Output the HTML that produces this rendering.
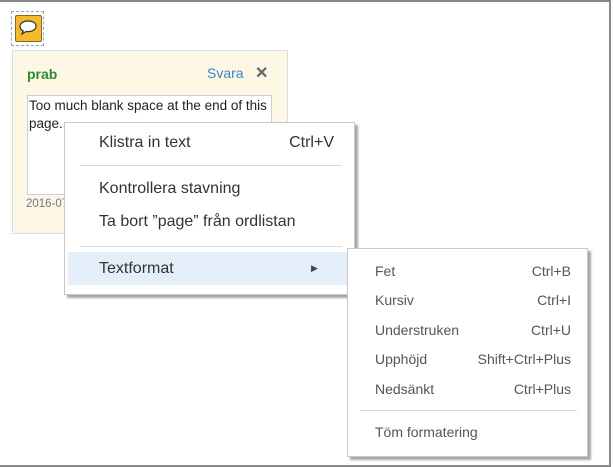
<!DOCTYPE html>
<html><head><style>
body{margin:0;width:613px;height:467px;background:#fff;position:relative;overflow:hidden;font-family:"Liberation Sans",sans-serif}
.frame{position:absolute;left:0;top:0;width:609px;height:463px;border:2px solid #8a8a8a;border-left:none;border-top:2px solid #888}
.abs{position:absolute}
.menu{position:absolute;background:#fff;border:1px solid #c8c8c8;box-shadow:3px 3px 2px rgba(0,0,0,.35)}
.m1 .it{position:absolute;left:34px;font-size:16px;color:#333}
.m1 .sc{position:absolute;right:20px;font-size:16px;color:#333}
.m2 .it{position:absolute;left:27px;font-size:14px;color:#555}
.m2 .sc{position:absolute;right:16px;font-size:14px;color:#555}
.sep{position:absolute;height:1px;background:#d8d8d8}
</style></head><body>
<div class="frame"></div>
<div class="abs" style="left:11px;top:11px;width:31px;height:33px;border:1px dashed #8ab"></div>
<div class="abs" style="left:15px;top:15px;width:25px;height:25px;background:#f5b92f;border:1px solid #8a6a20;border-radius:2px"></div>
<svg class="abs" style="left:17px;top:18px" width="22" height="20" viewBox="0 0 22 20"><path d="M11 3C6 3 3 5.5 3 8.5c0 2 1.3 3.5 3.2 4.4L5 16l4-2.5c.6.1 1.3.1 2 .1 5 0 8-2.5 8-5.5S16 3 11 3z" fill="#fff" stroke="#333" stroke-width="1.2"/></svg>
<div class="abs" style="left:12px;top:50px;width:274px;height:182px;background:#fdf7e6;border:1px solid #d6e0ea"></div>
<div class="abs" style="left:27px;top:66px;font-size:14px;font-weight:bold;color:#2e8b2e">prab</div>
<div class="abs" style="left:207px;top:65px;font-size:14px;color:#3a87c9">Svara</div>
<div class="abs" style="left:255px;top:63px;font-size:16px;color:#666;font-weight:bold">✕</div>
<div class="abs" style="left:27px;top:95px;width:243px;height:98px;background:#fff;border:1px solid #ccd"></div>
<div class="abs" style="left:29px;top:97px;font-size:13.5px;color:#222;line-height:18px">Too much blank space at the end of this<br>page.</div>
<div class="abs" style="left:26px;top:198px;font-size:11.5px;color:#777">2016-07</div>
<div class="menu m1" style="left:64px;top:122px;width:289px;height:171px">
<div class="it" style="top:11px">Klistra in text</div><div class="sc" style="top:11px">Ctrl+V</div>
<div class="sep" style="left:15px;right:12px;top:42px"></div>
<div class="it" style="top:57px">Kontrollera stavning</div>
<div class="it" style="top:90px">Ta bort ”page” från ordlistan</div>
<div class="sep" style="left:15px;right:12px;top:123px"></div>
<div class="abs" style="left:3px;right:0;top:129px;height:33px;background:#e4eef8"></div>
<div class="it" style="top:137px">Textformat</div>
<div class="abs" style="left:246px;top:140px;font-size:9px;color:#444">▶</div>
</div>
<div class="menu m2" style="left:347px;top:248px;width:239px;height:207px">
<div class="it" style="top:14px">Fet</div><div class="sc" style="top:14px">Ctrl+B</div>
<div class="it" style="top:43px">Kursiv</div><div class="sc" style="top:43px">Ctrl+I</div>
<div class="it" style="top:73px">Understruken</div><div class="sc" style="top:73px">Ctrl+U</div>
<div class="it" style="top:102px">Upphöjd</div><div class="sc" style="top:102px">Shift+Ctrl+Plus</div>
<div class="it" style="top:132px">Nedsänkt</div><div class="sc" style="top:132px">Ctrl+Plus</div>
<div class="sep" style="left:12px;right:10px;top:161px"></div>
<div class="it" style="top:175px">Töm formatering</div>
</div>
</body></html>
